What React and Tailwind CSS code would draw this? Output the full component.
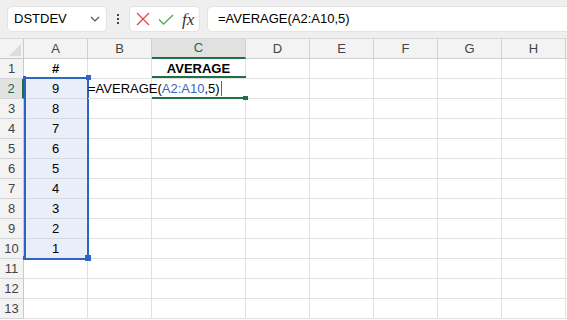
import React from "react";

const cols = ["A", "B", "C", "D", "E", "F", "G", "H"];
const values = [9, 8, 7, 6, 5, 4, 3, 2, 1];

function Cell({ children, className = "" }) {
  return (
    <div
      className={`h-[20px] border-r border-b border-[#e1e1e1] flex items-center text-[13px] text-black ${className}`}
    >
      {children}
    </div>
  );
}

function RowHead({ n }) {
  const active = n === 2;
  return (
    <div
      className={`h-[20px] flex items-center justify-center text-[13px] border-b border-[#d5d5d5] ${
        active
          ? "bg-[#e2e2e2] text-[#1d6b40] border-r-2 border-r-[#1e7145]"
          : "bg-[#f3f3f3] text-[#444] border-r border-r-[#c9c9c9]"
      }`}
    >
      {n}
    </div>
  );
}

export default function App() {
  const rows = Array.from({ length: 13 }, (_, i) => i + 1);

  return (
    <div
      className="w-[567px] h-[320px] overflow-hidden bg-white"
      style={{ fontFamily: '"Liberation Sans", Arial, sans-serif' }}
    >
      {/* formula bar */}
      <div className="h-[39px] bg-[#efefef] flex items-start pt-[6px] border-b border-[#d8d8d8]">
        <div className="ml-[7px] w-[100px] h-[26px] bg-white rounded-[5px] border border-[#e3e3e3] flex items-center justify-between pl-[6px] pr-[6px]">
          <span className="text-[13px] text-black">DSTDEV</span>
          <svg width="10" height="6" viewBox="0 0 10 6" fill="none">
            <path d="M1 1l4 4 4-4" stroke="#555" strokeWidth="1.2" />
          </svg>
        </div>
        <div className="w-[22px] h-[26px] flex flex-col items-center justify-center gap-[2px]">
          <span className="w-[2px] h-[2px] bg-[#444]" />
          <span className="w-[2px] h-[2px] bg-[#444]" />
          <span className="w-[2px] h-[2px] bg-[#444]" />
        </div>
        <div className="w-[71px] h-[26px] bg-white rounded-[5px] border border-[#e3e3e3] flex items-center pl-[6px] gap-[8px]">
          <svg width="14" height="14" viewBox="0 0 14 14">
            <path d="M1 1l12 12M13 1L1 13" stroke="#e0474a" strokeWidth="1.3" />
          </svg>
          <svg width="16" height="11" viewBox="0 0 16 11" fill="none">
            <path d="M1 5.5l4.5 4.5L15 1" stroke="#4caf50" strokeWidth="1.3" />
          </svg>
          <span
            className="text-[17px] italic text-[#333] leading-none"
            style={{ fontFamily: '"Liberation Serif", "Times New Roman", serif' }}
          >
            fx
          </span>
        </div>
        <div className="ml-[7px] flex-1 h-[26px] bg-white rounded-l-[5px] border border-r-0 border-[#e3e3e3] flex items-center pl-[10px]">
          <span className="text-[13px] text-black">=AVERAGE(A2:A10,5)</span>
        </div>
      </div>

      {/* grid */}
      <div className="relative grid grid-cols-[24px_64px_64px_94px_64px_64px_64px_64px_64px_1fr]">
        {/* header row */}
        <div className="h-[20px] bg-[#f3f3f3] border-r border-b border-[#c9c9c9] flex items-end justify-end p-[2px]">
          <svg width="12" height="12" viewBox="0 0 12 12">
            <path d="M12 0V12H0Z" fill="#dcdcdc" />
          </svg>
        </div>
        {cols.map((c) =>
          c === "C" ? (
            <div
              key={c}
              className="h-[20px] bg-[#e1e1e1] border-r border-[#d0d0d0] border-b-2 border-b-[#1e7145] flex items-center justify-center text-[13px] text-[#1d6b40]"
            >
              {c}
            </div>
          ) : (
            <div
              key={c}
              className="h-[20px] bg-[#f3f3f3] border-r border-b border-[#d0d0d0] flex items-center justify-center text-[13px] text-[#444]"
            >
              {c}
            </div>
          )
        )}
        <div className="h-[20px] bg-[#f3f3f3] border-b border-[#d0d0d0]" />

        {rows.map((r) => (
          <React.Fragment key={r}>
            <RowHead n={r} />
            {/* A */}
            <Cell
              className={`justify-center ${
                r >= 2 && r <= 10 ? "bg-[#e9eef8]" : ""
              } ${r === 1 ? "font-bold" : ""} ${
                r >= 2 && r <= 9 ? "border-b-[#d4dae4]" : ""
              }`}
            >
              {r === 1 ? "#" : r <= 10 ? values[r - 2] : ""}
            </Cell>
            {/* B */}
            <Cell className={r === 2 ? "relative z-10 overflow-visible" : ""}>
              {r === 2 && (
                <span className="whitespace-nowrap flex items-center">
                  =AVERAGE(<span className="text-[#3467c4]">A2:A10</span>,5)
                  <span className="ml-[1px] w-[1px] h-[15px] bg-[#666]" />
                </span>
              )}
            </Cell>
            {/* C */}
            <Cell
              className={`justify-center ${r === 1 ? "font-bold" : ""} ${
                r === 2 ? "border-r-0" : ""
              }`}
            >
              {r === 1 ? "AVERAGE" : ""}
            </Cell>
            <Cell />
            <Cell />
            <Cell />
            <Cell />
            <Cell />
            <Cell className="border-r-0" />
          </React.Fragment>
        ))}

        {/* selection A2:A10 */}
        <div className="absolute left-[24px] top-[38px] w-[65px] h-[183px] border-2 border-[#2e64c6] pointer-events-none" />
        <div className="absolute left-[23px] top-[37px] w-[3px] h-[4px] bg-[#2e64c6]" />
        <div className="absolute left-[86px] top-[36px] w-[5px] h-[5px] bg-[#2e64c6]" />
        <div className="absolute left-[23px] top-[217px] w-[3px] h-[4px] bg-[#2e64c6]" />
        <div className="absolute left-[85px] top-[216px] w-[6px] h-[6px] bg-[#2e64c6]" />

        {/* active cell C2 */}
        <div className="absolute left-[152px] top-[37px] w-[94px] h-[2px] bg-[#1e7145]" />
        <div className="absolute left-[152px] top-[58px] w-[91px] h-[2px] bg-[#1e7145]" />
        <div className="absolute left-[243px] top-[57px] w-[5px] h-[4px] bg-[#1e7145]" />
      </div>
    </div>
  );
}
